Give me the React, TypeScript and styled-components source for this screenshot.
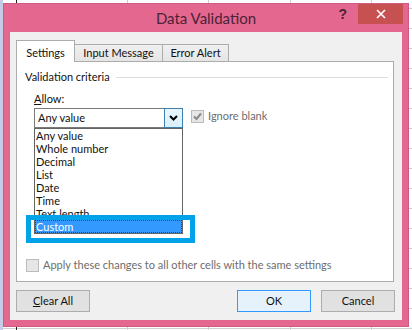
import React from "react";
import styled, { createGlobalStyle } from "styled-components";

const GlobalStyle = createGlobalStyle`
  html, body {
    margin: 0;
    padding: 0;
  }
  body {
    width: 412px;
    height: 330px;
    overflow: hidden;
    font-family: Lato, "Noto Sans", sans-serif;
    font-size: 11px;
    color: #111;
  }
`;

const gridLine = (x: number) =>
  `linear-gradient(to right, transparent ${x}px, #d0d0d0 ${x}px, #d0d0d0 ${x + 1}px, transparent ${x + 1}px)`;

const Desktop = styled.div`
  width: 412px;
  height: 330px;
  box-sizing: border-box;
  padding: 3px 0 0 3px;
  background-color: #fff;
  background-image:
    linear-gradient(to right, #c8cbe8 0, #c8cbe8 3px, transparent 3px),
    linear-gradient(to right, transparent 16px, #222 16px, #222 17px, transparent 17px),
    ${gridLine(127)},
    ${gridLine(208)},
    ${gridLine(290)},
    ${gridLine(371)},
    repeating-linear-gradient(to bottom, transparent 0, transparent 8px, #d0d0d0 8px, #d0d0d0 9px, transparent 9px, transparent 20px);
`;

const Window = styled.div`
  width: 406px;
  height: 324px;
  box-sizing: border-box;
  border: 1px solid #cf5a83;
  background: #e4678f;
  display: flex;
  flex-direction: column;
`;

const TitleBar = styled.div`
  height: 28px;
  display: grid;
  grid-template-columns: 1fr auto 1fr;
  align-items: start;
`;

const Title = styled.div`
  grid-column: 2;
  font-size: 15px;
  line-height: 28px;
  color: #4b2336;
`;

const Controls = styled.div`
  grid-column: 3;
  display: flex;
  justify-content: flex-end;
  align-items: flex-start;
  padding-right: 5px;
`;

const HelpGlyph = styled.span`
  font-family: "Liberation Sans", sans-serif;
  font-weight: bold;
  font-size: 14px;
  line-height: 20px;
  color: #4b2336;
  margin-right: 11px;
`;

const CloseButton = styled.div`
  width: 45px;
  height: 20px;
  background: #c75050;
  display: flex;
  align-items: center;
  justify-content: center;
`;

const Client = styled.div`
  flex: 1;
  margin: 0 6px 6px 6px;
  background: #f0f0f0;
  padding: 8px 0 0 6px;
  display: flex;
  flex-direction: column;
`;

const TabRow = styled.div`
  display: flex;
  align-items: flex-end;
  height: 22px;
  margin-bottom: -1px;
`;

const Tab = styled.div<{ $active?: boolean; $w: number }>`
  position: relative;
  z-index: ${(p) => (p.$active ? 2 : 0)};
  box-sizing: border-box;
  width: ${(p) => p.$w}px;
  height: ${(p) => (p.$active ? 22 : 18)}px;
  padding-top: ${(p) => (p.$active ? 2 : 0)}px;
  margin-left: ${(p) => (p.$active ? 0 : -1)}px;
  border: 1px solid #acacac;
  border-bottom: ${(p) => (p.$active ? "none" : "1px solid #acacac")};
  background: ${(p) => (p.$active ? "#fff" : "linear-gradient(#f0f0f0, #e5e5e5)")};
  display: flex;
  align-items: center;
  justify-content: center;
  line-height: 16px;
`;

const Panel = styled.div`
  position: relative;
  z-index: 1;
  width: 378px;
  height: 221px;
  box-sizing: border-box;
  border: 1px solid #acacac;
  background: #fff;
  display: flex;
  flex-direction: column;
  padding: 0 0 8px 0;
`;

const GroupHeader = styled.div`
  display: flex;
  align-items: center;
  gap: 6px;
  margin: 7px 5px 0 8px;
  line-height: 16px;
`;

const Rule = styled.div`
  flex: 1;
  height: 1px;
  background: #dcdcdc;
`;

const AllowBlock = styled.div`
  margin: 6px 0 0 17px;
  display: flex;
  flex-direction: column;
`;

const FieldLabel = styled.div`
  line-height: 16px;
  margin-bottom: 1px;
`;

const ComboRow = styled.div`
  display: flex;
  align-items: flex-start;
  gap: 8px;
`;

const ComboWrap = styled.div`
  position: relative;
`;

const Combo = styled.div`
  width: 149px;
  height: 20px;
  box-sizing: border-box;
  border: 1px solid #7a7a7a;
  display: flex;
  background: #fff;
`;

const ComboValue = styled.div`
  flex: 1;
  padding-left: 3px;
  line-height: 18px;
`;

const ComboButton = styled.div`
  width: 19px;
  margin: -1px -1px -1px 0;
  box-sizing: border-box;
  border: 1px solid #3c7fb1;
  background: linear-gradient(#eaf6fd, #d9f0fc);
  display: flex;
  align-items: center;
  justify-content: center;
`;

const DropList = styled.div`
  position: absolute;
  top: 100%;
  left: 0;
  width: 149px;
  box-sizing: border-box;
  border: 1px solid #646464;
  background: #fff;
  z-index: 5;
`;

const ListItem = styled.div<{ $selected?: boolean }>`
  height: 13px;
  line-height: 13px;
  padding-left: 1px;
  white-space: nowrap;
  color: ${(p) => (p.$selected ? "#fff" : "#111")};
  background: ${(p) => (p.$selected ? "#3399ff" : "transparent")};
  outline: ${(p) => (p.$selected ? "1px dotted #404060" : "none")};
  outline-offset: -1px;
`;

const Annotation = styled.div`
  position: absolute;
  left: -9px;
  top: 86px;
  width: 169px;
  height: 28px;
  box-sizing: border-box;
  border: 5px solid #00a2e8;
  pointer-events: none;
`;

const CheckRow = styled.label<{ $indent?: number }>`
  display: flex;
  align-items: center;
  gap: 4px;
  color: #6d6d6d;
  line-height: 16px;
  margin-left: ${(p) => p.$indent ?? 0}px;
`;

const CheckBox = styled.span`
  width: 13px;
  height: 13px;
  box-sizing: border-box;
  border: 1px solid #bcbcbc;
  background: #e6e6e6;
  display: flex;
  align-items: center;
  justify-content: center;
`;

const ApplyRow = styled(CheckRow)`
  margin-top: auto;
`;

const ButtonRow = styled.div`
  margin-top: 8px;
  width: 379px;
  display: flex;
  justify-content: space-between;
`;

const ButtonGroup = styled.div`
  display: flex;
  gap: 10px;
`;

const Button = styled.div<{ $default?: boolean }>`
  width: 74px;
  height: 22px;
  box-sizing: border-box;
  border: 1px solid ${(p) => (p.$default ? "#3399ff" : "#adadad")};
  background: ${(p) => (p.$default ? "#e5f1fb" : "#e1e1e1")};
  display: flex;
  align-items: center;
  justify-content: center;
  line-height: 16px;
`;

const Key = styled.span`
  text-decoration: underline;
`;

const Check = () => (
  <svg width="11" height="11" viewBox="0 0 11 11">
    <path d="M2 5.5 L4.5 8 L9 2.5" fill="none" stroke="#8a8a8a" strokeWidth="2" />
  </svg>
);

const items = [
  "Any value",
  "Whole number",
  "Decimal",
  "List",
  "Date",
  "Time",
  "Text length",
  "Custom",
];

export default function App() {
  return (
    <>
      <GlobalStyle />
      <Desktop>
        <Window>
          <TitleBar>
            <Title>Data Validation</Title>
            <Controls>
              <HelpGlyph>?</HelpGlyph>
              <CloseButton>
                <svg width="10" height="10" viewBox="0 0 10 10">
                  <path d="M1 1 L9 9 M9 1 L1 9" stroke="#fff" strokeWidth="1.6" />
                </svg>
              </CloseButton>
            </Controls>
          </TitleBar>
          <Client>
            <TabRow>
              <Tab $active $w={59}>Settings</Tab>
              <Tab $w={89}>Input Message</Tab>
              <Tab $w={67}>Error Alert</Tab>
            </TabRow>
            <Panel>
              <GroupHeader>
                <span>Validation criteria</span>
                <Rule />
              </GroupHeader>
              <AllowBlock>
                <FieldLabel>
                  <Key>A</Key>llow:
                </FieldLabel>
                <ComboRow>
                  <ComboWrap>
                    <Combo>
                      <ComboValue>Any value</ComboValue>
                      <ComboButton>
                        <svg width="9" height="6" viewBox="0 0 9 6">
                          <path d="M1 1 L4.5 4.5 L8 1" fill="none" stroke="#000" strokeWidth="2" />
                        </svg>
                      </ComboButton>
                    </Combo>
                    <DropList>
                      {items.map((it) => (
                        <ListItem key={it} $selected={it === "Custom"}>
                          {it}
                        </ListItem>
                      ))}
                      <Annotation />
                    </DropList>
                  </ComboWrap>
                  <CheckRow>
                    <CheckBox>
                      <Check />
                    </CheckBox>
                    Ignore blank
                  </CheckRow>
                </ComboRow>
              </AllowBlock>
              <ApplyRow $indent={9}>
                <CheckBox />
                Apply these changes to all other cells with the same settings
              </ApplyRow>
            </Panel>
            <ButtonRow>
              <Button>
                <span>
                  <Key>C</Key>lear All
                </span>
              </Button>
              <ButtonGroup>
                <Button $default>OK</Button>
                <Button>Cancel</Button>
              </ButtonGroup>
            </ButtonRow>
          </Client>
        </Window>
      </Desktop>
    </>
  );
}
